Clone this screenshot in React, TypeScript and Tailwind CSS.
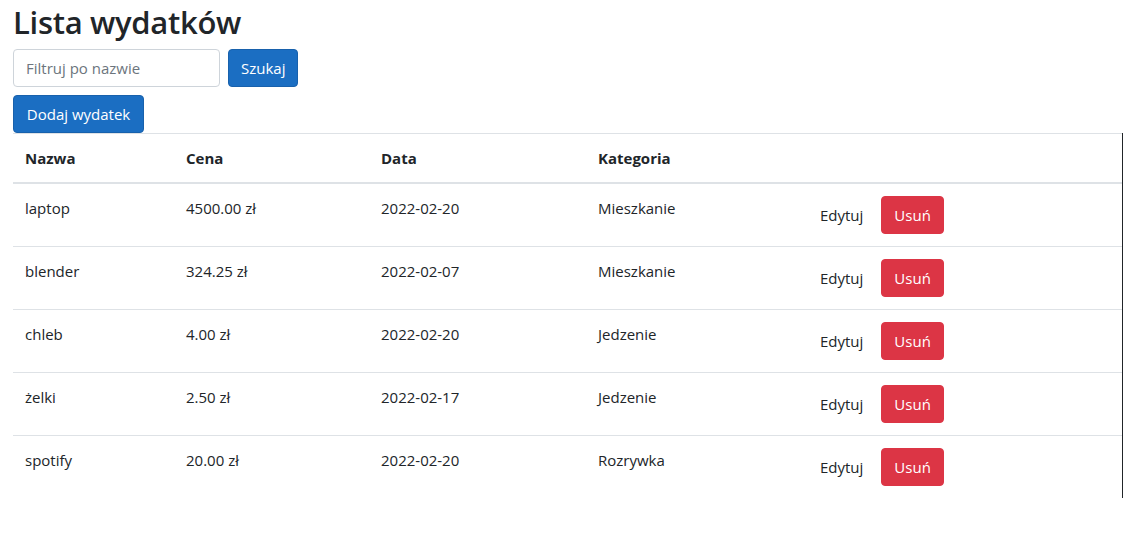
import React from "react";

interface Expense {
  id: number;
  name: string;
  price: string;
  date: string;
  category: string;
}

const expenses: Expense[] = [
  { id: 1, name: "laptop", price: "4500.00 zł", date: "2022-02-20", category: "Mieszkanie" },
  { id: 2, name: "blender", price: "324.25 zł", date: "2022-02-07", category: "Mieszkanie" },
  { id: 3, name: "chleb", price: "4.00 zł", date: "2022-02-20", category: "Jedzenie" },
  { id: 4, name: "żelki", price: "2.50 zł", date: "2022-02-17", category: "Jedzenie" },
  { id: 5, name: "spotify", price: "20.00 zł", date: "2022-02-20", category: "Rozrywka" },
];

const ExpenseRow = ({ item }: { item: Expense }) => {
  return (
    <tr className="border-t border-[#dee2e6] align-top">
      <td className="px-3 py-3 leading-6">{item.name}</td>
      <td className="px-3 py-3 leading-6">{item.price}</td>
      <td className="px-3 py-3 leading-6">{item.date}</td>
      <td className="px-3 py-3 leading-6">{item.category}</td>
      <td className="py-3 pl-3">
        <div className="flex items-center gap-[5px]">
          <button className="h-[38px] rounded border border-transparent px-3 leading-6 text-[#212529]">
            Edytuj
          </button>
          <button className="h-[38px] rounded border border-[#dc3545] bg-[#dc3545] px-3 leading-6 text-white">
            Usuń
          </button>
        </div>
      </td>
    </tr>
  );
};

export default function App() {
  return (
    <div className="min-h-[535px] bg-white px-[13px] font-['Open_Sans','Noto_Sans',sans-serif] text-[16px] text-[#212529]">
      {/* Header */}
      <h1 className="pt-[3px] text-[31px] font-semibold leading-[38px] tracking-[-0.3px]">Lista wydatków</h1>

      {/* Search */}
      <div className="mt-[8px] flex items-center gap-[8px]">
        <input
          type="text"
          placeholder="Filtruj po nazwie"
          className="h-[38px] w-[207px] rounded border border-[#ced4da] px-3 text-[15px] text-[#212529] placeholder:text-[#6c757d] outline-none"
        />
        <button className="h-[38px] rounded border border-[#1861ac] bg-[#1b6ec2] px-3 text-[15px] text-white">
          Szukaj
        </button>
      </div>

      <button className="mt-[8px] h-[38px] w-[131px] rounded border border-[#1861ac] bg-[#1b6ec2] px-3 text-[15px] text-white">
        Dodaj wydatek
      </button>

      {/* Table */}
      <div className="w-[1110px] border-r border-[#212529]">
        <table className="w-[1109px] table-fixed border-collapse text-[15px]">
          <thead>
            <tr className="border-t border-[#dee2e6]">
              <th className="w-[161px] border-b-2 border-[#dee2e6] px-3 py-3 text-left font-bold leading-6">Nazwa</th>
              <th className="w-[195px] border-b-2 border-[#dee2e6] px-3 py-3 text-left font-bold leading-6">Cena</th>
              <th className="w-[217px] border-b-2 border-[#dee2e6] px-3 py-3 text-left font-bold leading-6">Data</th>
              <th className="w-[209px] border-b-2 border-[#dee2e6] px-3 py-3 text-left font-bold leading-6">Kategoria</th>
              <th className="border-b-2 border-[#dee2e6] px-3 py-3"></th>
            </tr>
          </thead>
          <tbody>
            {expenses.map((item) => (
              <ExpenseRow key={item.id} item={item} />
            ))}
          </tbody>
        </table>
      </div>
    </div>
  );
}
